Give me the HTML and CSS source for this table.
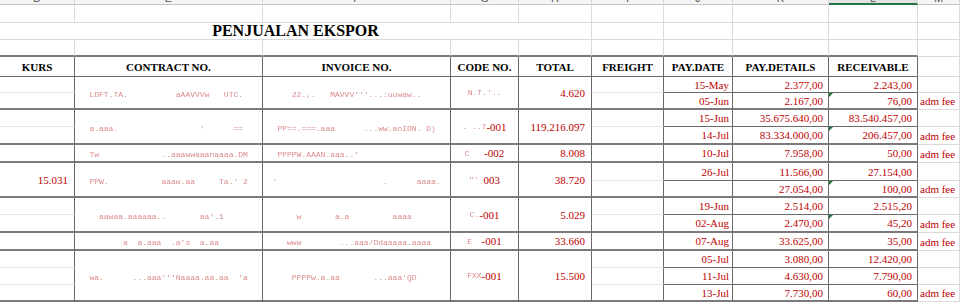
FILE: index.html
```html
<!DOCTYPE html>
<html>
<head>
<meta charset="utf-8">
<link rel="stylesheet" href="styles.css">
</head>
<body>
<div class="sheet">
  <!-- column header strip -->
  <div class="h"><span>D</span></div>
  <div class="h"><span>E</span></div>
  <div class="h"><span>F</span></div>
  <div class="h"><span>G</span></div>
  <div class="h"><span>H</span></div>
  <div class="h"><span>I</span></div>
  <div class="h"><span>J</span></div>
  <div class="h"><span>K</span></div>
  <div class="h sel"><span>L</span></div>
  <div class="h"><span>M</span></div>

  <!-- empty row -->
  <div class="c"></div><div class="c"></div><div class="c"></div><div class="c"></div><div class="c"></div>
  <div class="c"></div><div class="c"></div><div class="c"></div><div class="c"></div><div class="c"></div>

  <!-- title row -->
  <div class="c title">PENJUALAN EKSPOR</div>
  <div class="c"></div><div class="c"></div><div class="c"></div><div class="c"></div><div class="c"></div>

  <!-- empty row above header -->
  <div class="c gb"></div><div class="c gb"></div><div class="c gb"></div><div class="c gb"></div><div class="c gb"></div>
  <div class="c gb"></div><div class="c gb"></div><div class="c gb"></div><div class="c gb"></div><div class="c"></div>

  <!-- header -->
  <div class="c t th">KURS</div>
  <div class="c t th">CONTRACT NO.</div>
  <div class="c t th">INVOICE NO.</div>
  <div class="c t th">CODE NO.</div>
  <div class="c t th">TOTAL</div>
  <div class="c t th">FREIGHT</div>
  <div class="c t th">PAY.DATE</div>
  <div class="c t th">PAY.DETAILS</div>
  <div class="c t th">RECEIVABLE</div>
  <div class="c"></div>

  <!-- group 1 -->
  <div class="c t il"></div>
  <div class="c t gb r2 frag"><span class="rd">   LDFT.TA.          aAAVVVw   UTC.</span></div>
  <div class="c t gb r2 frag"><span class="rd">      22.,.   MAVVV'''...:uuwaw..</span></div>
  <div class="c t gb r2 ctr"><span class="rd">N.T.'..</span></div>
  <div class="c t gb r2 rt tot">4.620</div>
  <div class="c t il"></div>
  <div class="c t rt dt">15-May</div>
  <div class="c t rt">2.377,00</div>
  <div class="c t rt">2.243,00</div>
  <div class="c"></div>
  <div class="c t gb"></div>
  <div class="c t gb"></div>
  <div class="c t gb rt dt">05-Jun</div>
  <div class="c t gb rt">2.167,00</div>
  <div class="c t gb rt tri">76,00</div>
  <div class="c note">adm fee</div>

  <!-- group 2 -->
  <div class="c t il"></div>
  <div class="c t gb r2 frag"><span class="rd">   a.aaa.                 '      ==</span></div>
  <div class="c t gb r2 frag"><span class="rd">   PP==.===.aaa      ...ww.anIDN. D)</span></div>
  <div class="c t gb r2 ctr"><span class="rd">. ..7</span>-001</div>
  <div class="c t gb r2 rt tot">119.216.097</div>
  <div class="c t il"></div>
  <div class="c t rt dt">15-Jun</div>
  <div class="c t rt">35.675.640,00</div>
  <div class="c t rt">83.540.457,00</div>
  <div class="c"></div>
  <div class="c t gb"></div>
  <div class="c t gb"></div>
  <div class="c t gb rt dt">14-Jul</div>
  <div class="c t gb rt">83.334.000,00</div>
  <div class="c t gb rt tri">206.457,00</div>
  <div class="c note">adm fee</div>

  <!-- group 3 -->
  <div class="c t gb"></div>
  <div class="c t gb frag"><span class="rd">   Tw             ..aaawwaaanaaaa.DM</span></div>
  <div class="c t gb frag"><span class="rd">   PPPPW.AAAN.aaa..'</span></div>
  <div class="c t gb ctr"><span class="rd">C   </span>-002</div>
  <div class="c t gb rt tot">8.008</div>
  <div class="c t gb"></div>
  <div class="c t gb rt dt">10-Jul</div>
  <div class="c t gb rt">7.958,00</div>
  <div class="c t gb rt">50,00</div>
  <div class="c note">adm fee</div>

  <!-- group 4 -->
  <div class="c t gb r2 rt kurs">15.031</div>
  <div class="c t gb r2 frag"><span class="rd">   PPW.           aaaw.aa     Ta.' 2</span></div>
  <div class="c t gb r2 frag"><span class="rd">  '                      .      aaaa.</span></div>
  <div class="c t gb r2 ctr"><span class="rd">"' </span>003</div>
  <div class="c t gb r2 rt tot">38.720</div>
  <div class="c t il"></div>
  <div class="c t rt dt">26-Jul</div>
  <div class="c t rt">11.566,00</div>
  <div class="c t rt">27.154,00</div>
  <div class="c"></div>
  <div class="c t gb"></div>
  <div class="c t gb rt dt"></div>
  <div class="c t gb rt">27.054,00</div>
  <div class="c t gb rt tri">100,00</div>
  <div class="c note">adm fee</div>

  <!-- group 5 -->
  <div class="c t il"></div>
  <div class="c t gb r2 frag"><span class="rd">     aawaa.aaaaaa..       aa'.1</span></div>
  <div class="c t gb r2 frag"><span class="rd">       w       a.a         aaaa</span></div>
  <div class="c t gb r2 ctr"><span class="rd">C.</span>-001</div>
  <div class="c t gb r2 rt tot">5.029</div>
  <div class="c t il"></div>
  <div class="c t rt dt">19-Jun</div>
  <div class="c t rt">2.514,00</div>
  <div class="c t rt">2.515,20</div>
  <div class="c"></div>
  <div class="c t gb"></div>
  <div class="c t gb"></div>
  <div class="c t gb rt dt">02-Aug</div>
  <div class="c t gb rt">2.470,00</div>
  <div class="c t gb rt tri">45,20</div>
  <div class="c note">adm fee</div>

  <!-- group 6 -->
  <div class="c t gb"></div>
  <div class="c t gb frag"><span class="rd">          a  a.aaa  .a's  a.aa</span></div>
  <div class="c t gb frag"><span class="rd">     www        ...aaa/Ddaaaaa.aaaa</span></div>
  <div class="c t gb ctr"><span class="rd">E  </span>-001</div>
  <div class="c t gb rt tot">33.660</div>
  <div class="c t gb"></div>
  <div class="c t gb rt dt">07-Aug</div>
  <div class="c t gb rt">33.625,00</div>
  <div class="c t gb rt">35,00</div>
  <div class="c note">adm fee</div>

  <!-- group 7 -->
  <div class="c t il"></div>
  <div class="c t gb r3 frag"><span class="rd">   wa.      ...aaa'''Naaaa.aa.aa  'a</span></div>
  <div class="c t gb r3 frag"><span class="rd">      PPPPw.a.aa       ...aaa'QD</span></div>
  <div class="c t gb r3 ctr"><span class="rd">FXX</span>-001</div>
  <div class="c t gb r3 rt tot">15.500</div>
  <div class="c t il"></div>
  <div class="c t rt dt">05-Jul</div>
  <div class="c t rt">3.080,00</div>
  <div class="c t rt">12.420,00</div>
  <div class="c"></div>
  <div class="c t il"></div>
  <div class="c t il"></div>
  <div class="c t rt dt">11-Jul</div>
  <div class="c t rt">4.630,00</div>
  <div class="c t rt">7.790,00</div>
  <div class="c"></div>
  <div class="c t gb"></div>
  <div class="c t gb"></div>
  <div class="c t gb rt dt">13-Jul</div>
  <div class="c t gb rt">7.730,00</div>
  <div class="c t gb rt">60,00</div>
  <div class="c note">adm fee</div>
</div>
</body>
</html>
```
FILE: styles.css
```css
* { box-sizing: border-box; margin: 0; padding: 0; }
html, body { background: #fff; }
body {
  margin: 0;
  overflow: hidden;
  font-family: "Liberation Serif", "Times New Roman", serif;
}
.sheet {
  display: grid;
  width: 960px;
  height: 303px;
  grid-template-columns: 75px 188px 188px 68px 73px 72px 69px 96px 89px 42px;
  grid-template-rows: 5px 18px 17px 17px 20px 16px 17px 17px 18px 18px 18px 17px 17px 18px 18px 17px 17px 17px;
}

/* column letter strip */
.h {
  background: #f4f4f4;
  border-right: 1px solid #dcdcdc;
  border-bottom: 1px solid #c6c6c6;
  overflow: hidden;
  display: flex;
  justify-content: center;
  align-items: flex-start;
  font-family: "Liberation Sans", Arial, sans-serif;
  font-size: 11px;
  color: #555;
}
.h span { line-height: 12px; margin-top: -8px; }
.h.sel { background: #e2e2e2; border-bottom: 2px solid #217346; }

/* cells */
.c {
  display: flex;
  align-items: center;
  border-right: 1px solid #dadada;
  border-bottom: 1px solid #dadada;
  font-size: 11px;
  color: #c00000;
  white-space: pre;
  overflow: hidden;
  position: relative;
}
.t { border-right-color: #6a6a6a; border-bottom-color: #6a6a6a; }
.il { border-bottom: 1px solid #e4e4e4; }
.gb { border-bottom: 2px solid #7a7a7a; }

.r2 { grid-row: span 2; }
.r3 { grid-row: span 3; }

.title {
  grid-column: span 5;
  justify-content: center;
  font-size: 16px;
  font-weight: bold;
  color: #000;
}
.th {
  justify-content: center;
  font-weight: bold;
  color: #000;
  font-size: 11px;
}

.rt { justify-content: flex-end; padding-right: 5px; }
.dt { padding-right: 3px; }
.tot { padding-right: 6px; }
.kurs { padding-right: 6px; }
.ctr { justify-content: center; }
.note { padding-left: 2px; }

.frag { justify-content: flex-start; padding-top: 3px; }
.rd {
  font-family: "Liberation Mono", "Courier New", monospace;
  font-size: 8px;
  color: #c23a3a;
  opacity: 0.6;
  filter: blur(0.7px);
}

/* green error indicator */
.tri::before {
  content: "";
  position: absolute;
  left: 0;
  top: 0;
  border-top: 4px solid #1e7a3c;
  border-right: 4px solid transparent;
}
```
